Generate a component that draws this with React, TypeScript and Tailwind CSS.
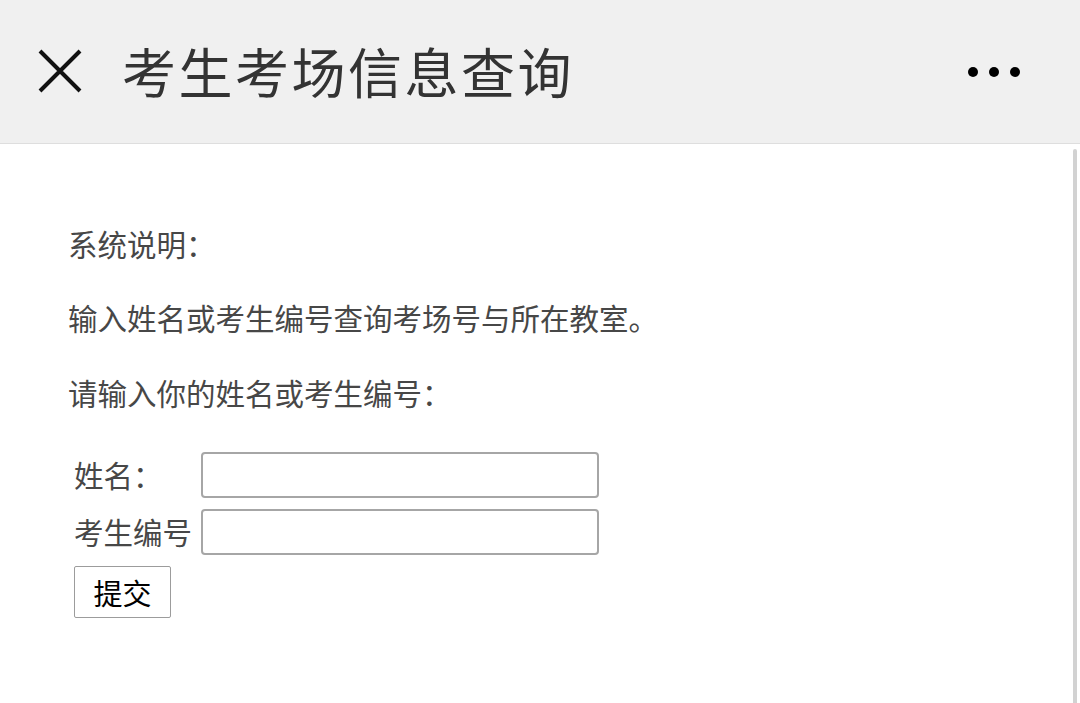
export default function App() {
  const font = { fontFamily: '"Noto Sans CJK SC", "Noto Sans", sans-serif' };

  return (
    <div className="w-[1080px] h-[703px] overflow-hidden bg-white flex flex-col" style={font}>
      <header className="h-[144px] shrink-0 bg-[#f0f0f0] border-b border-[#dedede] flex items-center">
        <div className="w-[122px] pl-[38px] pb-[1px]">
          <svg width="44" height="44" viewBox="0 0 44 44">
            <path d="M2 2 L42 42 M42 2 L2 42" stroke="#111" strokeWidth="4" />
          </svg>
        </div>
        <h1 className="text-[54px] leading-none tracking-[2.5px] text-[#333] font-normal pb-[2px]">考生考场信息查询</h1>
        <div className="ml-auto mr-[60px] flex gap-[11px]">
          <span className="w-[10px] h-[10px] rounded-full bg-black" />
          <span className="w-[10px] h-[10px] rounded-full bg-black" />
          <span className="w-[10px] h-[10px] rounded-full bg-black" />
        </div>
      </header>

      <div className="flex flex-1">
        <main className="flex-1 pl-[68px] pt-[79px] text-[29.5px] text-[#474747]">
          <p className="leading-[40px]">系统说明：</p>
          <p className="leading-[40px] mt-[34px]">输入姓名或考生编号查询考场号与所在教室。</p>
          <p className="leading-[40px] mt-[35px]">请输入你的姓名或考生编号：</p>

          <form className="mt-[40px] ml-[6px]" onSubmit={(e) => e.preventDefault()}>
            <div className="flex items-center">
              <label className="w-[127px] leading-none">姓名：</label>
              <input className="w-[398px] h-[46px] border-2 border-[#a6a6a6] rounded-[4px] outline-none" />
            </div>
            <div className="flex items-center mt-[11px]">
              <label className="w-[127px] leading-none">考生编号</label>
              <input className="w-[398px] h-[46px] border-2 border-[#a6a6a6] rounded-[4px] outline-none" />
            </div>
            <button
              type="submit"
              className="mt-[11px] w-[97px] h-[52px] border-[1.5px] border-[#9c9c9c] rounded-[2px] bg-white text-black text-[29px] leading-none"
            >
              提交
            </button>
          </form>
        </main>
        <div className="w-[4px] mr-[3px] mt-[5px] h-[560px] rounded-full bg-[#d2d2d2]" />
      </div>
    </div>
  );
}
